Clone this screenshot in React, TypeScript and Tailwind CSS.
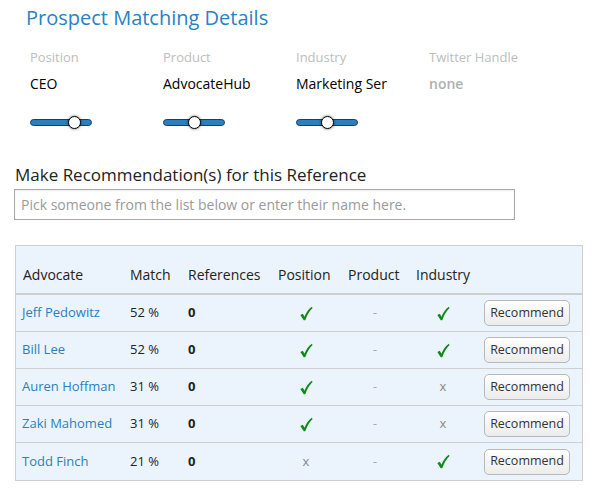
import React from "react";

const font = { fontFamily: '"Open Sans", "Liberation Sans", sans-serif' };

function Slider({ pos }: { pos: number }) {
  return (
    <div className="relative h-[14px] w-[62px]">
      <div className="absolute left-0 right-0 top-[4px] h-[7px] rounded-full border border-[#1d3f5c] bg-[#2a7fc0]" />
      <div
        className="absolute top-[1px] h-[13px] w-[13px] rounded-full border border-black bg-white shadow-[0_0_3px_rgba(0,0,0,0.6)]"
        style={{ left: pos }}
      />
    </div>
  );
}

function Check() {
  return (
    <svg width="14" height="15" viewBox="0 0 13 14" className="inline-block">
      <path d="M1.2 8.3 L3.6 7.2 L5 10 C7 5.8 9 2.8 12 0.8 L12.6 1.8 C9.6 4.6 7.6 8.2 5.8 13.2 L4.4 13.2 Z" fill="#0f8a12" />
    </svg>
  );
}

const rows = [
  { name: "Jeff Pedowitz", match: "52 %", pos: true, ind: true },
  { name: "Bill Lee", match: "52 %", pos: true, ind: true },
  { name: "Auren Hoffman", match: "31 %", pos: true, ind: false },
  { name: "Zaki Mahomed", match: "31 %", pos: true, ind: false },
  { name: "Todd Finch", match: "21 %", pos: false, ind: true },
];

export default function App() {
  const cols = [
    { label: "Position", value: "CEO", slider: 38 },
    { label: "Product", value: "AdvocateHub", slider: 25 },
    { label: "Industry", value: "Marketing Ser", slider: 25 },
    { label: "Twitter Handle", value: "none", slider: -1 },
  ];
  return (
    <div className="h-[488px] w-[607px] bg-white text-[#222]" style={font}>
      <div className="pl-[26px] pt-[4px] text-[20px] leading-[28px] text-[#2a81c4]">
        Prospect Matching Details
      </div>
      <div className="flex pl-[30px] pt-[16px]">
        {cols.map((c) => (
          <div key={c.label} className="w-[133px]">
            <div className="text-[13px] leading-[18px] text-[#bdbdbd]">{c.label}</div>
            <div
              className={
                "mt-[8px] text-[14px] leading-[20px] " +
                (c.slider < 0 ? "font-semibold text-[#b0b0b0]" : "text-black")
              }
            >
              {c.value}
            </div>
            {c.slider >= 0 && (
              <div className="mt-[21px]">
                <Slider pos={c.slider} />
              </div>
            )}
          </div>
        ))}
      </div>
      <div className="pl-[15px] pt-[34px] text-[17px] leading-[24px] text-[#222]">
        Make Recommendation(s) for this Reference
      </div>
      <div className="ml-[14px] mt-[2px] flex h-[31px] w-[501px] items-center border border-[#a8a8a8] pl-[6px] text-[14px] text-[#9a9a9a] shadow-[inset_0_1px_2px_rgba(0,0,0,0.08)]">
        Pick someone from the list below or enter their name here.
      </div>
      <div className="ml-[15px] mt-[25px] w-[568px] border border-[#cfcfcf] bg-[#ebf4fc]">
        <div className="flex h-[49px] items-end border-b-2 border-[#cfcfcf] pb-[9px] text-[14px] leading-[18px] text-[#222]">
          <div className="w-[114px] pl-[7px]">Advocate</div>
          <div className="w-[58px]">Match</div>
          <div className="w-[90px]">References</div>
          <div className="w-[70px]">Position</div>
          <div className="w-[68px]">Product</div>
          <div className="w-[68px]">Industry</div>
        </div>
        {rows.map((r, i) => (
          <div
            key={r.name}
            className={
              "flex h-[37px] items-center text-[13px] " +
              (i < rows.length - 1 ? "border-b border-[#cfcfcf]" : "")
            }
          >
            <div className="w-[114px] pl-[6px] text-[#2a7fc1]">{r.name}</div>
            <div className="w-[58px] text-[#222]">{r.match}</div>
            <div className="w-[90px] font-bold text-[#222]">0</div>
            <div className="flex w-[70px] justify-center pr-[14px]">
              {r.pos ? <Check /> : <span className="text-[#888]">x</span>}
            </div>
            <div className="flex w-[68px] justify-center pr-[14px] text-[#aaa]">-</div>
            <div className="flex w-[68px] justify-center pr-[14px]">
              {r.ind ? <Check /> : <span className="text-[#888]">x</span>}
            </div>
            <div>
              <button className="h-[26px] w-[86px] rounded-[5px] border border-[#b8b8b8] bg-gradient-to-b from-white to-[#ececec] text-[12.5px] text-[#333]">
                Recommend
              </button>
            </div>
          </div>
        ))}
      </div>
    </div>
  );
}
